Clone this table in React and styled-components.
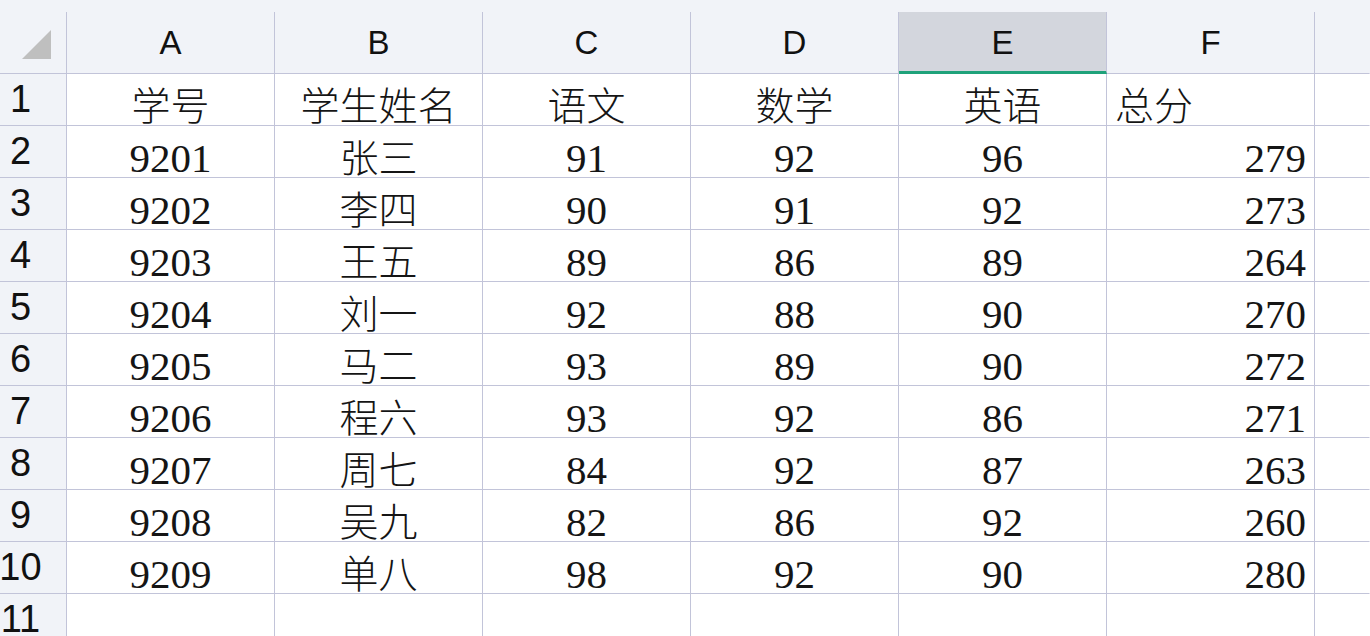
import React from "react";
import styled, { createGlobalStyle } from "styled-components";

const LINE = "#c2c4d9";
const HEAD_BG = "#f1f3f8";

const Global = createGlobalStyle`
  html, body { margin: 0; padding: 0; background: #ffffff; }
  body { width: 1370px; height: 636px; overflow: hidden; }
`;

const Sheet = styled.div`
  width: 1370px;
  height: 636px;
  overflow: hidden;
  background: #ffffff;
`;

const Row = styled.div`
  display: grid;
  grid-template-columns: 67px repeat(6, 208px) 1fr;
`;

const HeaderRow = styled(Row)`
  padding-top: 12px;
  background: ${HEAD_BG};
`;

const Corner = styled.div`
  position: relative;
  height: 62px;
  box-sizing: border-box;
  border-right: 1px solid ${LINE};
  border-bottom: 1px solid ${LINE};
`;

const CornerTriangle = styled.svg`
  position: absolute;
  left: 22px;
  top: 18px;
`;

const ColHead = styled.div`
  height: 62px;
  box-sizing: border-box;
  border-right: 1px solid ${(p) => (p.$last ? "transparent" : LINE)};
  border-bottom: ${(p) => (p.$active ? "3px solid #1fa27a" : `1px solid ${LINE}`)};
  background: ${(p) => (p.$active ? "#d3d6dd" : "transparent")};
  display: flex;
  align-items: center;
  justify-content: center;
  padding-top: ${(p) => (p.$active ? "2px" : "0")};
  font-family: "Liberation Sans", Arial, sans-serif;
  font-size: 33px;
  color: #111;
`;

const RowHead = styled.div`
  height: 52px;
  box-sizing: border-box;
  background: ${HEAD_BG};
  border-right: 1px solid ${LINE};
  border-bottom: 1px solid ${LINE};
  display: flex;
  align-items: center;
  justify-content: center;
  padding-right: 25px;
  padding-bottom: 2px;
  font-family: "Liberation Sans", Arial, sans-serif;
  font-size: 38px;
  line-height: 38px;
  color: #111;
  white-space: nowrap;
`;

const Cell = styled.div`
  height: 52px;
  box-sizing: border-box;
  border-right: 1px solid ${(p) => (p.$last ? "transparent" : LINE)};
  border-bottom: 1px solid ${LINE};
  display: flex;
  align-items: flex-end;
  justify-content: ${(p) =>
    p.$align === "right" ? "flex-end" : p.$align === "left" ? "flex-start" : "center"};
  padding: 0 8px 1px 8px;
  font-family: "Liberation Serif", "Noto Sans CJK SC", serif;
  font-size: 41px;
  line-height: 36px;
  color: #151515;
  white-space: nowrap;
`;

const CjkText = styled.span`
  font-family: "Noto Sans CJK SC", sans-serif;
  font-size: 39px;
  font-weight: 300;
  position: relative;
  top: -3px;
`;

const cols = ["A", "B", "C", "D", "E", "F"];

const data = [
  ["学号", "学生姓名", "语文", "数学", "英语", "总分"],
  ["9201", "张三", "91", "92", "96", "279"],
  ["9202", "李四", "90", "91", "92", "273"],
  ["9203", "王五", "89", "86", "89", "264"],
  ["9204", "刘一", "92", "88", "90", "270"],
  ["9205", "马二", "93", "89", "90", "272"],
  ["9206", "程六", "93", "92", "86", "271"],
  ["9207", "周七", "84", "92", "87", "263"],
  ["9208", "吴九", "82", "86", "92", "260"],
  ["9209", "单八", "98", "92", "90", "280"],
  ["", "", "", "", "", ""],
];

const isCjk = (s) => /[\u4e00-\u9fff]/.test(s);

export default function App() {
  return (
    <>
      <Global />
      <Sheet>
        <HeaderRow>
          <Corner>
            <CornerTriangle width="30" height="30" viewBox="0 0 30 30">
              <polygon points="29,0 29,29 0,29" fill="#bfbfbf" />
            </CornerTriangle>
          </Corner>
          {cols.map((c) => (
            <ColHead key={c} $active={c === "E"}>
              {c}
            </ColHead>
          ))}
          <ColHead $last />
        </HeaderRow>
        {data.map((row, i) => (
          <Row key={i}>
            <RowHead>{i + 1}</RowHead>
            {row.map((v, j) => {
              let align = "center";
              if (j === 5) align = isCjk(v) ? "left" : "right";
              return (
                <Cell key={j} $align={align}>
                  {isCjk(v) ? <CjkText>{v}</CjkText> : v}
                </Cell>
              );
            })}
            <Cell $last />
          </Row>
        ))}
      </Sheet>
    </>
  );
}
